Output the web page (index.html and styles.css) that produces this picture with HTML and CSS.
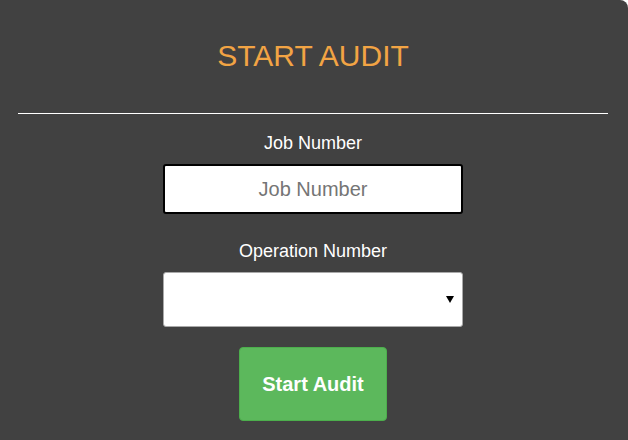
FILE: index.html
```html
<!DOCTYPE html>
<html lang="en">
<head>
    <meta charset="UTF-8">
    <meta name="viewport" content="width=device-width, initial-scale=1.0">
    <title>Start Audit</title>
    <link rel="stylesheet" href="styles.css">
</head>
<body>
    <div class="card">
        <h1>START AUDIT</h1>
        <hr class="divider">

        <form class="audit-form" onsubmit="return false;">
            <label class="field-label" for="job">Job Number</label>
            <input class="text-input" id="job" type="text" placeholder="Job Number">

            <label class="field-label second" for="operation">Operation Number</label>
            <div class="select-wrap">
                <select class="select-input" id="operation">
                    <option value=""></option>
                </select>
            </div>

            <button class="button" type="submit">Start Audit</button>
        </form>
    </div>
</body>
</html>
```

FILE: styles.css
```css
html, body {
    margin: 0;
    padding: 0;
    background: #ffffff;
}
body {
    font-family: "Liberation Sans", Arial, sans-serif;
}
.card {
    background: #414141;
    min-height: 440px;
    padding: 0 20px 0 18px;
    border-top-right-radius: 8px;
    box-sizing: border-box;
}
h1 {
    margin: 0;
    padding-top: 39px;
    color: #f2a444;
    font-size: 30px;
    font-weight: normal;
    line-height: 34px;
    text-align: center;
}
.divider {
    margin: 40px 0 0;
    border: none;
    height: 1px;
    background: #ffffff;
}
.audit-form {
    display: flex;
    flex-direction: column;
    align-items: center;
    padding-top: 19px;
}
.field-label {
    color: #ffffff;
    font-size: 18px;
    line-height: 21px;
    margin-bottom: 10px;
}
.field-label.second {
    margin-top: 27px;
}
.text-input {
    width: 300px;
    height: 50px;
    box-sizing: border-box;
    border: 2px solid #000000;
    border-radius: 3px;
    background: #ffffff;
    font-family: inherit;
    font-size: 20px;
    text-align: center;
    outline: none;
}
.text-input::placeholder {
    color: #757575;
}
.select-wrap {
    position: relative;
    width: 300px;
}
.select-wrap::after {
    content: "";
    position: absolute;
    right: 9px;
    top: 24px;
    border-left: 4px solid transparent;
    border-right: 4px solid transparent;
    border-top: 7px solid #000000;
    pointer-events: none;
}
.select-input {
    -webkit-appearance: none;
    appearance: none;
    display: block;
    width: 300px;
    height: 55px;
    box-sizing: border-box;
    border: 1px solid #a9a9a9;
    border-radius: 3px;
    background: #ffffff;
    font-family: inherit;
    font-size: 18px;
}
.button {
    margin-top: 20px;
    width: 148px;
    height: 74px;
    background: #5cb85c;
    color: #ffffff;
    border: 1px solid #4cae4c;
    border-radius: 4px;
    font-family: inherit;
    font-size: 20px;
    font-weight: bold;
    cursor: pointer;
}
.button:hover {
    background: #449d44;
}
```
